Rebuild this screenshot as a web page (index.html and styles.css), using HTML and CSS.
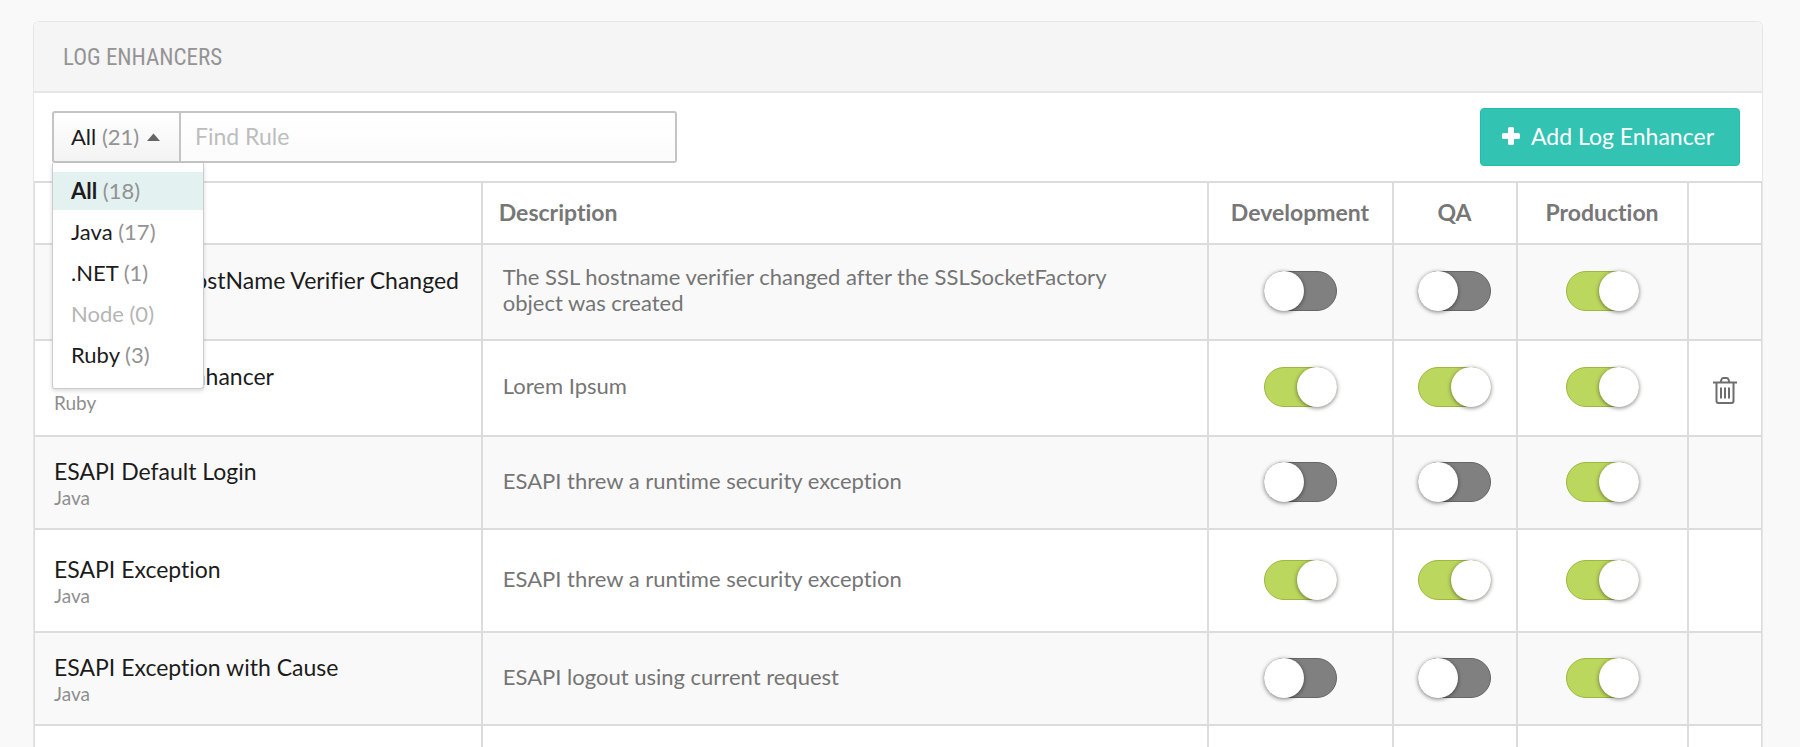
FILE: index.html
```html
<!DOCTYPE html>
<html lang="en">
<head>
<meta charset="utf-8">
<title>Log Enhancers</title>
<link rel="stylesheet" href="styles.css">
</head>
<body>
<main class="panel">
  <header class="panel-header"><h1 class="panel-title">LOG ENHANCERS</h1></header>

  <div class="toolbar">
    <div class="search">
      <div class="filter">
        <button class="filter-button" type="button" aria-haspopup="true" aria-expanded="true">
          <span>All <span class="count">(21)</span></span>
          <svg class="caret" viewBox="0 0 13 8" aria-hidden="true"><path d="M6.5 0.5 13 8H0z"/></svg>
        </button>
        <ul class="menu">
          <li><button class="menu-item menu-item-active" type="button"><strong>All</strong> <span class="count">(18)</span></button></li>
          <li><button class="menu-item" type="button">Java <span class="count">(17)</span></button></li>
          <li><button class="menu-item" type="button">.NET <span class="count">(1)</span></button></li>
          <li><button class="menu-item" type="button" disabled>Node <span class="count">(0)</span></button></li>
          <li><button class="menu-item" type="button">Ruby <span class="count">(3)</span></button></li>
        </ul>
      </div>
      <input class="search-input" type="text" placeholder="Find Rule" aria-label="Find Rule">
    </div>
    <button class="add-button" type="button">
      <svg class="plus" viewBox="0 0 18 18" aria-hidden="true"><path d="M7.6 0h2.8Q12 0 12 1.600V6h4.400Q18 6 18 7.600v2.800Q18 12 16.400 12H12v4.400Q12 18 10.400 18H7.600Q6 18 6 16.400V12H1.600Q0 12 0 10.400V7.600Q0 6 1.600 6H6V1.600Q6 0 7.600 0z"/></svg>
      <span>Add Log Enhancer</span>
    </button>
  </div>

  <table class="rules">
    <colgroup>
      <col class="col-name"><col><col class="col-dev"><col class="col-qa"><col class="col-prod"><col class="col-actions">
    </colgroup>
    <thead>
      <tr>
        <td></td>
        <th class="head-description" scope="col">Description</th>
        <th scope="col">Development</th>
        <th scope="col">QA</th>
        <th scope="col">Production</th>
        <td></td>
      </tr>
    </thead>
    <tbody>
      <tr>
        <td class="name"><div class="rule">Default SSL HostName Verifier Changed</div><div class="language">Java</div></td>
        <td class="description">The SSL hostname verifier changed after the SSLSocketFactory object was created</td>
        <td class="switch"><input class="toggle" type="checkbox" aria-label="Development"></td>
        <td class="switch"><input class="toggle" type="checkbox" aria-label="QA"></td>
        <td class="switch"><input class="toggle" type="checkbox" aria-label="Production" checked></td>
        <td></td>
      </tr>
      <tr>
        <td class="name"><div class="rule">Custom Log Enhancer</div><div class="language">Ruby</div></td>
        <td class="description">Lorem Ipsum</td>
        <td class="switch"><input class="toggle" type="checkbox" aria-label="Development" checked></td>
        <td class="switch"><input class="toggle" type="checkbox" aria-label="QA" checked></td>
        <td class="switch"><input class="toggle" type="checkbox" aria-label="Production" checked></td>
        <td class="actions">
          <button class="delete-button" type="button" aria-label="Delete">
            <svg class="trash" viewBox="0 0 24 27" aria-hidden="true">
              <path d="M0 5.500h24M3.500 5.500v18.500q0 2 2 2h13q2 0 2-2V5.500M7.500 5.500 8.500 2.500q.5-1.500 2-1.500h3q1.500 0 2 1.500l1 3M8 10.500v11M12 10.500v11M16 10.500v11"/>
            </svg>
          </button>
        </td>
      </tr>
      <tr class="row-short">
        <td class="name"><div class="rule">ESAPI Default Login</div><div class="language">Java</div></td>
        <td class="description">ESAPI threw a runtime security exception</td>
        <td class="switch"><input class="toggle" type="checkbox" aria-label="Development"></td>
        <td class="switch"><input class="toggle" type="checkbox" aria-label="QA"></td>
        <td class="switch"><input class="toggle" type="checkbox" aria-label="Production" checked></td>
        <td></td>
      </tr>
      <tr class="row-tall">
        <td class="name"><div class="rule">ESAPI Exception</div><div class="language">Java</div></td>
        <td class="description">ESAPI threw a runtime security exception</td>
        <td class="switch"><input class="toggle" type="checkbox" aria-label="Development" checked></td>
        <td class="switch"><input class="toggle" type="checkbox" aria-label="QA" checked></td>
        <td class="switch"><input class="toggle" type="checkbox" aria-label="Production" checked></td>
        <td></td>
      </tr>
      <tr class="row-short">
        <td class="name"><div class="rule">ESAPI Exception with Cause</div><div class="language">Java</div></td>
        <td class="description">ESAPI logout using current request</td>
        <td class="switch"><input class="toggle" type="checkbox" aria-label="Development"></td>
        <td class="switch"><input class="toggle" type="checkbox" aria-label="QA"></td>
        <td class="switch"><input class="toggle" type="checkbox" aria-label="Production" checked></td>
        <td></td>
      </tr>
      <tr class="row-last"><td></td><td></td><td></td><td></td><td></td><td></td></tr>
    </tbody>
  </table>
</main>
</body>
</html>
```
FILE: styles.css
```css
* {
  box-sizing: border-box;
}

body {
  margin: 0;
  padding: 21px 37px 0 33px;
  background: #f9f9f9;
  color: #1c1c1c;
  font: 23px/26px Lato, "Open Sans", sans-serif;
  font-variant-ligatures: none;
}

button,
input {
  margin: 0;
  font: inherit;
  color: inherit;
}

.panel {
  border: 1px solid #e6e6e6;
  border-bottom: 0;
  border-radius: 6px 6px 0 0;
  background: #fff;
}

.panel-header {
  padding: 23px 29px 20px;
  border-bottom: 2px solid #e6e6e6;
  border-radius: 6px 6px 0 0;
  background: #f5f5f5;
}

.panel-title {
  margin: 0;
  color: #949494;
  font: 400 23px/26px "Roboto Condensed", "Liberation Sans Narrow", Roboto, sans-serif;
}

/* Toolbar */

.toolbar {
  display: flex;
  align-items: center;
  justify-content: space-between;
  padding: 15px 22px 15px 18px;
}

.search {
  display: flex;
  width: 625px;
  height: 52px;
}

.filter {
  position: relative;
  font-size: 22px;
}

.filter-button {
  display: flex;
  align-items: center;
  gap: 8px;
  width: 129px;
  height: 52px;
  padding: 0 0 0 17px;
  border: 2px solid #c4c4c4;
  border-radius: 3px 0 0 3px;
  background: linear-gradient(#fff, #f3f3f3);
  white-space: nowrap;
}

.count {
  color: #939393;
}

.caret {
  width: 13px;
  height: 8px;
  fill: #666;
}

.search-input {
  flex: 1;
  min-width: 0;
  padding: 0 14px 2px;
  border: 2px solid #c4c4c4;
  border-left: 0;
  border-radius: 0 3px 3px 0;
  background: linear-gradient(#fff, #fbfbfb);
}

.search-input::placeholder {
  color: #bdbdbd;
  opacity: 1;
}

.menu {
  position: absolute;
  z-index: 1;
  top: 100%;
  left: 0;
  display: grid;
  gap: 3px;
  width: 152px;
  margin: 0;
  padding: 9px 0 14px;
  border: 1px solid #ccc;
  border-top: 0;
  border-radius: 0 0 3px 3px;
  background: #fff;
  box-shadow: 0 2px 4px rgba(0, 0, 0, 0.15);
  list-style: none;
}

.menu-item {
  display: block;
  width: 100%;
  padding: 6px 18px;
  border: 0;
  background: none;
  text-align: left;
}

.menu-item-active {
  background: #e3f1f0;
}

.menu-item:disabled,
.menu-item:disabled .count {
  color: #b5b5b5;
}

.add-button {
  display: flex;
  align-items: center;
  gap: 11px;
  height: 58px;
  padding: 0 25px 2px 21px;
  border: 1px solid #20bda9;
  border-radius: 4px;
  background: #32c3b3;
  color: #fff;
}

.plus {
  width: 18px;
  height: 18px;
  fill: #fff;
}

/* Rules table */

.rules {
  width: 100%;
  table-layout: fixed;
  border-collapse: collapse;
}

.col-name {
  width: 25.9%;
}

.col-dev {
  width: 185px;
}

.col-qa {
  width: 124px;
}

.col-prod {
  width: 171px;
}

.col-actions {
  width: 74px;
}

.rules th,
.rules td {
  padding: 0 0 2px;
  border: 2px solid #dcdcdc;
}

.rules tr > :first-child {
  border-left-width: 1px;
}

.rules tr > :last-child {
  border-right-width: 1px;
}

.rules thead tr {
  height: 62px;
}

.rules th {
  color: #777;
  font-weight: 700;
}

.rules .head-description {
  padding-left: 16px;
  text-align: left;
}

.rules tbody tr {
  height: 96px;
}

.rules tbody .row-short {
  height: 93px;
}

.rules tbody .row-tall {
  height: 103px;
}

.rules tbody .row-last {
  height: 22px;
}

.rules .row-last td {
  border-bottom: 0;
}

.rules tbody tr:nth-child(odd) {
  background: #f9f9f9;
}

.rules tbody .row-last:last-child {
  background: #fff;
}

.rules .name {
  padding: 2px 0 0 19px;
  white-space: nowrap;
}

.rule {
  line-height: 28px;
}

.language {
  color: #8f8f8f;
  font-size: 19px;
}

.rules .description {
  padding: 0 60px 4px 20px;
  color: #757575;
  font-size: 22px;
}

.switch {
  text-align: center;
}

.toggle {
  appearance: none;
  display: inline-block;
  width: 73px;
  height: 40px;
  border: 1px solid #666;
  border-radius: 20px;
  background: #808080;
  vertical-align: middle;
}

.toggle::before {
  content: "";
  display: block;
  width: 40px;
  height: 40px;
  margin: -1px;
  border-radius: 50%;
  background: #fff;
  box-shadow: 0 1px 4px rgba(0, 0, 0, 0.5);
}

.toggle:checked {
  border-color: #9db73f;
  background: #bcd75d;
}

.toggle:checked::before {
  margin-left: 32px;
}

.rules .actions {
  padding: 4px 0 0;
  text-align: center;
}

.delete-button {
  padding: 4px;
  border: 0;
  background: none;
  vertical-align: middle;
}

.trash {
  display: block;
  width: 24px;
  height: 27px;
  fill: none;
  stroke: #6e6e6e;
  stroke-width: 2;
}
```
